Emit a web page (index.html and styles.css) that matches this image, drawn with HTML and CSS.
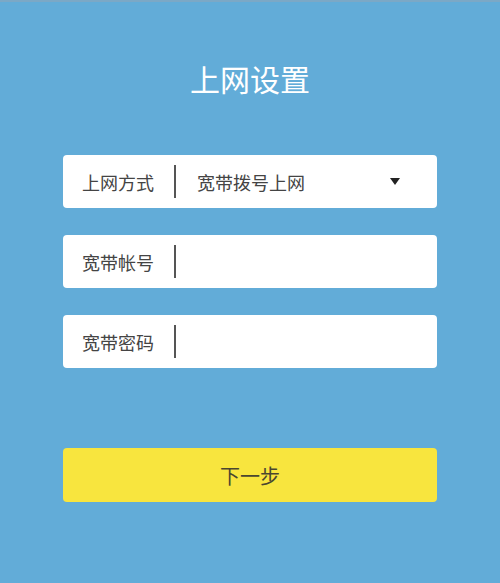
FILE: index.html
```html
<!DOCTYPE html>
<html lang="zh-CN">
<head>
  <meta charset="UTF-8">
  <title>上网设置</title>
  <link rel="stylesheet" href="styles.css">
</head>
<body>

<div class="page">
  <h1 class="title">上网设置</h1>

  <div class="form">
    <div class="field">
      <span class="label">上网方式</span>
      <span class="divider"></span>
      <span class="value">宽带拨号上网</span>
      <span class="arrow"></span>
    </div>
    <div class="field">
      <span class="label">宽带帐号</span>
      <span class="divider"></span>
    </div>
    <div class="field">
      <span class="label">宽带密码</span>
      <span class="divider"></span>
    </div>
  </div>

  <button class="next">下一步</button>
</div>

</body>
</html>
```

FILE: styles.css
```css
html, body {
  margin: 0;
  padding: 0;
  height: 100%;
}
body {
  font-family: "Noto Sans CJK SC", "Noto Sans", sans-serif;
  background-color: #62acd8;
  border-top: 2px solid #7ba8c6;
  box-sizing: border-box;
}
.page {
  width: 374px;
  margin: 0 auto;
  padding-top: 56px;
}
.title {
  margin: 0;
  text-align: center;
  font-size: 30px;
  font-weight: normal;
  line-height: 40px;
  color: #fff;
}
.form {
  margin-top: 57px;
  display: flex;
  flex-direction: column;
  gap: 27px;
}
.field {
  display: flex;
  align-items: center;
  height: 53px;
  padding-left: 19px;
  background: #fff;
  border-radius: 4px;
  font-size: 18px;
  color: #444;
}
.divider {
  width: 2px;
  height: 33px;
  margin: 0 21px 0 20px;
  background: #555;
}
.value {
  flex: 1;
}
.arrow {
  width: 0;
  height: 0;
  margin-right: 37px;
  border-left: 5px solid transparent;
  border-right: 5px solid transparent;
  border-top: 7px solid #222;
}
.next {
  display: block;
  width: 100%;
  height: 54px;
  margin-top: 80px;
  border: none;
  border-radius: 4px;
  background: #f8e53e;
  font-family: inherit;
  font-size: 20px;
  color: #4a4630;
}
```
